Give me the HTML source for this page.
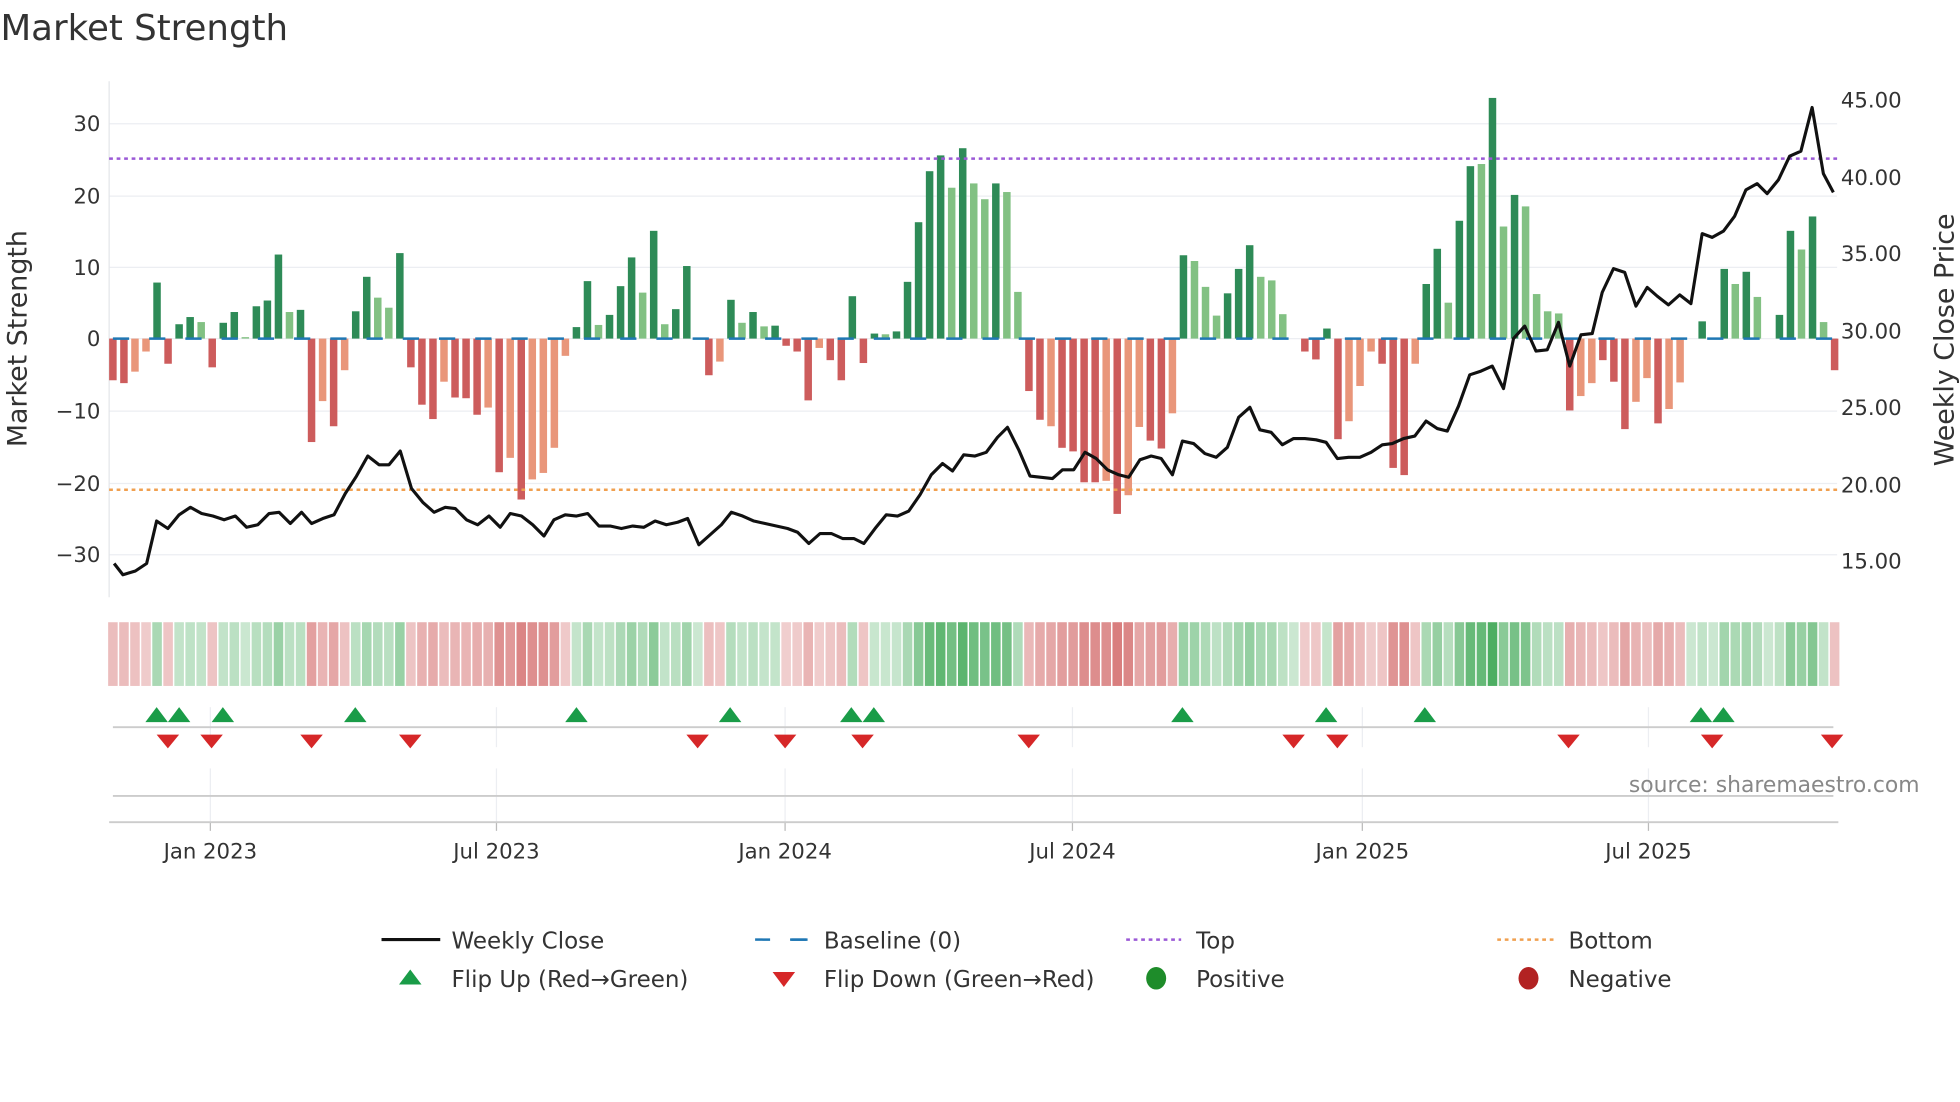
<!DOCTYPE html>
<html><head><meta charset="utf-8"><style>
html,body{margin:0;padding:0;background:#fff;}
svg{display:block;font-family:"DejaVu Sans","Liberation Sans",sans-serif;}
</style></head><body>
<svg id="s" width="1960" height="1102" viewBox="0 0 1568 882" xmlns="http://www.w3.org/2000/svg">
<rect width="1568" height="882" fill="#fff"/>
<text x="0" y="32" font-size="28.5" fill="#333">Market Strength</text>
<g id="grid"></g>
<g id="bars"></g>
<g id="heat"></g>
<g id="marks"></g>
<text x="1536" y="634" font-size="17.5" fill="#888" text-anchor="end">source: sharemaestro.com</text>
<g font-size="17" fill="#333">
<text x="80" y="105" text-anchor="end">30</text>
<text x="80" y="163" text-anchor="end">20</text>
<text x="80" y="220" text-anchor="end">10</text>
<text x="80" y="277" text-anchor="end">0</text>
<text x="80" y="335" text-anchor="end">−10</text>
<text x="80" y="393" text-anchor="end">−20</text>
<text x="80" y="450" text-anchor="end">−30</text>
<text x="1473" y="86">45.00</text>
<text x="1473" y="148">40.00</text>
<text x="1473" y="209">35.00</text>
<text x="1473" y="271">30.00</text>
<text x="1473" y="332">25.00</text>
<text x="1473" y="394">20.00</text>
<text x="1473" y="455">15.00</text>
<text x="168" y="687" text-anchor="middle">Jan 2023</text>
<text x="397" y="687" text-anchor="middle">Jul 2023</text>
<text x="628" y="687" text-anchor="middle">Jan 2024</text>
<text x="858" y="687" text-anchor="middle">Jul 2024</text>
<text x="1090" y="687" text-anchor="middle">Jan 2025</text>
<text x="1319" y="687" text-anchor="middle">Jul 2025</text>
</g>
<text transform="translate(21,271) rotate(-90)" font-size="21.5" fill="#333" text-anchor="middle">Market Strength</text>
<text transform="translate(1563,272) rotate(-90)" font-size="21.5" fill="#333" text-anchor="middle">Weekly Close Price</text>
<g font-size="18.4" fill="#333">
<line x1="305" y1="752" x2="352" y2="752" stroke="#111" stroke-width="2.5"/>
<text x="361" y="759">Weekly Close</text>
<line x1="604" y1="752" x2="646" y2="752" stroke="#1f77b4" stroke-width="2" stroke-dasharray="12 17"/>
<line x1="632" y1="752" x2="646" y2="752" stroke="#1f77b4" stroke-width="2"/>
<text x="659" y="759">Baseline (0)</text>
<line x1="901" y1="752" x2="945" y2="752" stroke="#9b59d6" stroke-width="2" stroke-dasharray="3 3"/>
<text x="957" y="759">Top</text>
<line x1="1198" y1="752" x2="1243" y2="752" stroke="#f0a050" stroke-width="2" stroke-dasharray="3 3"/>
<text x="1255" y="759">Bottom</text>
<polygon points="319,788 337,788 328,776" fill="#1a9c48"/>
<text x="361" y="790">Flip Up (Red→Green)</text>
<polygon points="618,778 636,778 627,790" fill="#d62728"/>
<text x="659" y="790">Flip Down (Green→Red)</text>
<ellipse cx="925" cy="783" rx="8" ry="9" fill="#1e8c2a"/>
<text x="957" y="790">Positive</text>
<ellipse cx="1223" cy="783" rx="8" ry="9" fill="#b22222"/>
<text x="1255" y="790">Negative</text>
</g>
</svg>
<script>
var NS="http://www.w3.org/2000/svg";
function el(p,t,a){var e=document.createElementNS(NS,t);for(var k in a)e.setAttribute(k,a[k]);document.getElementById(p).appendChild(e);return e;}
[99,157,214,271,329,387,444].forEach(function(y){el("grid","line",{x1:87,x2:1470,y1:y,y2:y,stroke:"#eceef2","stroke-width":1});});
el("grid","line",{x1:87,x2:87,y1:65,y2:478,stroke:"#e4e6ea","stroke-width":1});
[168,397,628,858,1090,1319].forEach(function(x){el("grid","line",{x1:x,x2:x,y1:566,y2:598,stroke:"#eceef2"});el("grid","line",{x1:x,x2:x,y1:615,y2:658,stroke:"#eceef2"});el("grid","line",{x1:x,x2:x,y1:658,y2:665,stroke:"#bbb"});});
el("grid","line",{x1:90,x2:1467,y1:582,y2:582,stroke:"#ccc","stroke-width":1.5});
el("grid","line",{x1:90,x2:1467,y1:637,y2:637,stroke:"#ccc","stroke-width":1.5});
el("grid","line",{x1:87,x2:1471,y1:658,y2:658,stroke:"#ccc","stroke-width":1.5});
var A=[[-5.8,1],[-6.2,1],[-4.6,0],[-1.8,0],[7.8,1],[-3.5,1],[2,1],[3,1],[2.3,0],[-4,1],[2.2,1],[3.7,1],[0.2,0],[4.5,1],[5.3,1],[11.7,1],[3.7,0],[4,1],[-14.4,1],[-8.7,0],[-12.2,1],[-4.4,0],[3.8,1],[8.6,1],[5.7,0],[4.3,0],[11.9,1],[-4,1],[-9.2,1],[-11.2,1],[-6,0],[-8.2,1],[-8.3,1],[-10.6,1],[-9.6,0],[-18.6,1],[-16.6,0],[-22.4,1],[-19.6,0],[-18.7,0],[-15.2,0],[-2.4,0],[1.6,1],[8,1],[1.9,0],[3.3,1],[7.3,1],[11.3,1],[6.4,0],[15,1],[2,0],[4.1,1],[10.1,1],[0,0],[-5.1,1],[-3.2,0],[5.4,1],[2.2,0],[3.7,1],[1.7,0],[1.8,1],[-1,1],[-1.8,1],[-8.6,1],[-1.3,0],[-3,1],[-5.8,1],[5.9,1],[-3.4,1],[0.7,1],[0.6,0],[1,1],[7.9,1],[16.2,1],[23.3,1],[25.5,1],[21,0],[26.5,1],[21.6,0],
[19.4,0],[21.6,1],[20.4,0],[6.5,0],[-7.3,1],[-11.3,1],[-12.2,0],[-15.2,1],[-15.7,1],[-20,1],[-20,1],[-19.8,0],[-24.4,1],[-21.8,0],[-12.3,0],[-14.2,1],[-15.3,1],[-10.4,0],[11.6,1],[10.8,0],[7.2,0],[3.2,0],[6.3,1],[9.7,1],[13,1],[8.6,0],[8.1,0],[3.4,0],[0,0],[-1.8,1],[-2.9,1],[1.4,1],[-14,1],[-11.5,0],[-6.6,0],[-1.8,0],[-3.5,1],[-18,1],[-19,1],[-3.5,0],[7.6,1],[12.5,1],[5,0],[16.4,1],[24,1],[24.3,0],[33.5,1],[15.6,0],[20,1],[18.4,0],[6.2,0],[3.8,0],[3.5,0],[-10,1],[-8,0],[-6.2,0],[-3,1],[-6,1],[-12.6,1],[-8.8,0],[-5.5,0],[-11.8,1],[-9.8,0],[-6.1,0],[0,0],[2.4,1],[0,0],[9.7,1],[7.6,0],[9.3,1],[5.8,0],[0,0],[3.3,1],[15,1],[12.4,0],[17,1],[2.3,0],[-4.4,1]];
var n=A.length, x0=90, dx=(1468-90)/(n-1);
A.forEach(function(d,i){var v=d[0],x=x0+i*dx,y=271-v*5.75,h=Math.abs(v*5.75);
 var c=v>=0?(d[1]?"#2e8b57":"#82c183"):(d[1]?"#cd5c5c":"#e9967a");
 if(h>0.5)el("bars","rect",{x:x-3,y:Math.min(y,271),width:6,height:h,fill:c});
 var t=Math.min(1,Math.abs(v)/30);
 var hc=v>=0?"rgba(46,160,70,"+(0.25+0.6*t)+")":"rgba(200,70,70,"+(0.25+0.55*t)+")";
 el("heat","rect",{x:x-4.4+0.6,y:498,width:dx-1.2,height:51,fill:hc});
});
el("bars","line",{x1:90,x2:1468,y1:271,y2:271,stroke:"#1f77b4","stroke-width":2,"stroke-dasharray":"13 16"});
el("bars","line",{x1:87,x2:1470,y1:127,y2:127,stroke:"#9b59d6","stroke-width":2,"stroke-dasharray":"3 3"});
el("bars","line",{x1:87,x2:1470,y1:392,y2:392,stroke:"#f0a050","stroke-width":2,"stroke-dasharray":"3 3"});
var P=[[91,451],[98,460],[108,457],[117,451],[125,417],[134,423],[143,412],[152,406],[161,411],[170,413],[179,416],[188,413],[197,422],[206,420],[215,411],[223,410],[232,419],[241,410],[249,419],[258,415],[267,412],[276,395],[285,381],[294,365],[303,372],[311,372],[320,361],[329,391],[338,402],[347,410],[356,406],[364,407],[373,416],[382,420],[391,413],[400,422],[408,411],[417,413],[426,420],[435,429],[443,416],[452,412],[461,413],[470,411],[479,421],[488,421],[497,423],[506,421],[515,422],[524,417],[533,420],[542,418],[550,415],[559,436],[568,428],[577,420],[585,410],[594,413],[603,417],[612,419],[621,421],[630,423],[638,426],[647,435],[656,427],[665,427],[674,431],[683,431],[691,435],[700,423],[709,412],[718,413],[727,409],[736,396],[745,380],[754,371],[762,377],[771,364],[780,365],[789,362],[798,350],[806,342],[815,360],[824,381],[833,382],[842,383],[850,376],[859,376],[868,362],[877,367],[886,376],[895,380],[903,382],[912,368],[921,365],[929,367],[938,380],[946,353],[955,355],[964,363],[973,366],[982,358],[991,334],[1000,326],[1008,344],[1017,346],[1026,356],[1035,351],[1044,351],[1053,352],[1061,354],[1070,367],[1079,366],[1088,366],[1097,362],[1106,356],[1114,355],[1123,351],[1132,349],[1141,337],[1150,343],[1158,345],[1167,325],[1176,300],[1185,297],[1194,293],[1203,311],[1211,271],[1220,261],[1229,281],[1238,280],[1247,258],[1256,293],[1265,268],[1274,267],[1282,234],[1291,215],[1300,218],[1309,245],[1318,230],[1326,237],[1335,244],[1344,236],[1353,243],[1362,187],[1370,190],[1379,185],[1388,173],[1397,152],[1406,147],[1414,155],[1423,144],[1432,125],[1441,121],[1450,86],[1459,139],[1467,154]];
el("bars","polyline",{points:P.map(function(p){return p.join(",")}).join(" "),fill:"none",stroke:"#111","stroke-width":2.5,"stroke-linejoin":"round"});
[125,143,178,284,461,584,681,699,946,1061,1140,1361,1379].forEach(function(x){el("marks","polygon",{points:(x-9)+",578 "+(x+9)+",578 "+x+",566",fill:"#1a9c48"});});
[134,169,249,328,558,628,690,823,1035,1070,1255,1370,1466].forEach(function(x){el("marks","polygon",{points:(x-9)+",588 "+(x+9)+",588 "+x+",599",fill:"#d62728"});});
</script>
</body></html>
